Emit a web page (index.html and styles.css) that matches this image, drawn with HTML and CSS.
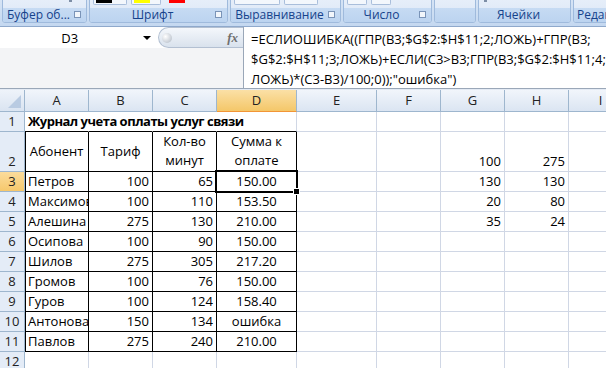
FILE: index.html
```html
<!DOCTYPE html>
<html lang="ru">
<head>
    <meta charset="UTF-8">
    <title>Журнал учета оплаты услуг связи</title>
    <link rel="stylesheet" href="styles.css">
</head>
<body>
    <div class="ribbon">
        <div class="group g1">
            <div class="btns"><span class="tick"></span></div>
            <div class="glabel">Буфер об...<span class="launcher"></span></div>
        </div>
        <div class="group g2">
            <div class="btns">
                <span class="btn w34"><span class="bar black"></span></span>
                <span class="btn w30"><span class="bar yellow"></span></span>
                <span class="bar red"></span>
            </div>
            <div class="glabel">Шрифт<span class="launcher"></span></div>
        </div>
        <div class="group g3">
            <div class="btns">
                <span class="btn w46"></span>
                <span class="btn w34"></span>
            </div>
            <div class="glabel">Выравнивание<span class="launcher"></span></div>
        </div>
        <div class="group g4">
            <div class="btns">
                <span class="btn w20"></span>
                <span class="btn w20"></span>
            </div>
            <div class="glabel">Число<span class="launcher"></span></div>
        </div>
        <div class="group g5">
            <div class="btns"></div>
            <div class="glabel blank"></div>
        </div>
        <div class="group g6">
            <div class="btns"><span class="tick"></span></div>
            <div class="glabel">Ячейки</div>
        </div>
        <div class="group g7">
            <div class="btns"></div>
            <div class="glabel left">Редакт</div>
        </div>
    </div>

    <div class="fbar">
        <div class="fleft">
            <div class="ftop">
                <div class="namebox">D3</div>
                <span class="dd"></span>
                <div class="fxpill">
                    <span class="ball"></span>
                    <span class="fx">fx</span>
                </div>
            </div>
        </div>
        <div class="formula">
            <div>=ЕСЛИОШИБКА((ГПР(B3;$G$2:$H$11;2;ЛОЖЬ)+ГПР(B3;</div>
            <div>$G$2:$H$11;3;ЛОЖЬ)+ЕСЛИ(C3&gt;B3;ГПР(B3;$G$2:$H$11;4;</div>
            <div>ЛОЖЬ)*(C3-B3)/100;0));"ошибка")</div>
        </div>
    </div>
    <div class="split"></div>

    <div class="sheet">
        <div class="corner"></div>
        <div class="ch">A</div><div class="ch">B</div><div class="ch">C</div><div class="ch on">D</div>
        <div class="ch">E</div><div class="ch">F</div><div class="ch">G</div><div class="ch">H</div><div class="ch">I</div>

        <div class="rh">1</div>
        <div class="c title nor tb">Журнал учета оплаты услуг связи</div>
        <div class="c nor tb"></div><div class="c nor tb"></div><div class="c tb"></div>
        <div class="c"></div><div class="c"></div><div class="c"></div><div class="c"></div><div class="c"></div>

        <div class="rh tall">2</div>
        <div class="c t first mid ctr">Абонент</div>
        <div class="c t mid ctr">Тариф</div>
        <div class="c t wrap">Кол-во минут</div>
        <div class="c t wrap">Сумма к оплате</div>
        <div class="c"></div><div class="c"></div>
        <div class="c num">100</div><div class="c num">275</div><div class="c"></div>

        <div class="rh on">3</div>
        <div class="c t first">Петров</div><div class="c t num">100</div><div class="c t num">65</div>
        <div class="c t ctr sel">150.00</div>
        <div class="c"></div><div class="c"></div>
        <div class="c num">130</div><div class="c num">130</div><div class="c"></div>

        <div class="rh">4</div>
        <div class="c t first">Максимов</div><div class="c t num">100</div><div class="c t num">110</div>
        <div class="c t ctr">153.50</div>
        <div class="c"></div><div class="c"></div>
        <div class="c num">20</div><div class="c num">80</div><div class="c"></div>

        <div class="rh">5</div>
        <div class="c t first">Алешина</div><div class="c t num">275</div><div class="c t num">130</div>
        <div class="c t ctr">210.00</div>
        <div class="c"></div><div class="c"></div>
        <div class="c num">35</div><div class="c num">24</div><div class="c"></div>

        <div class="rh">6</div>
        <div class="c t first">Осипова</div><div class="c t num">100</div><div class="c t num">90</div>
        <div class="c t ctr">150.00</div>
        <div class="c"></div><div class="c"></div><div class="c"></div><div class="c"></div><div class="c"></div>

        <div class="rh">7</div>
        <div class="c t first">Шилов</div><div class="c t num">275</div><div class="c t num">305</div>
        <div class="c t ctr">217.20</div>
        <div class="c"></div><div class="c"></div><div class="c"></div><div class="c"></div><div class="c"></div>

        <div class="rh">8</div>
        <div class="c t first">Громов</div><div class="c t num">100</div><div class="c t num">76</div>
        <div class="c t ctr">150.00</div>
        <div class="c"></div><div class="c"></div><div class="c"></div><div class="c"></div><div class="c"></div>

        <div class="rh">9</div>
        <div class="c t first">Гуров</div><div class="c t num">100</div><div class="c t num">124</div>
        <div class="c t ctr">158.40</div>
        <div class="c"></div><div class="c"></div><div class="c"></div><div class="c"></div><div class="c"></div>

        <div class="rh">10</div>
        <div class="c t first">Антонова</div><div class="c t num">150</div><div class="c t num">134</div>
        <div class="c t ctr">ошибка</div>
        <div class="c"></div><div class="c"></div><div class="c"></div><div class="c"></div><div class="c"></div>

        <div class="rh">11</div>
        <div class="c t first">Павлов</div><div class="c t num">275</div><div class="c t num">240</div>
        <div class="c t ctr">210.00</div>
        <div class="c"></div><div class="c"></div><div class="c"></div><div class="c"></div><div class="c"></div>

        <div class="rh">12</div>
        <div class="c"></div><div class="c"></div><div class="c"></div><div class="c"></div>
        <div class="c"></div><div class="c"></div><div class="c"></div><div class="c"></div><div class="c"></div>
    </div>
</body>
</html>
```

FILE: styles.css
```css
body {
    margin: 0;
    width: 606px;
    height: 368px;
    overflow: hidden;
    background-color: #fff;
    font-family: "Open Sans", "Noto Sans", sans-serif;
    color: #000;
}

/* ribbon */
.ribbon {
    display: flex;
    gap: 2px;
    height: 26px;
    padding-left: 2px;
    background: linear-gradient(#d6e4f5, #c4d8f0);
    border-bottom: 1px solid #8fa9cc;
    overflow: hidden;
}
.group {
    flex: none;
    box-sizing: border-box;
    height: 24px;
    margin-top: -1px;
    display: flex;
    flex-direction: column;
    justify-content: space-between;
    border: 1px solid #9fbadc;
    border-radius: 0 0 3px 3px;
    background: linear-gradient(#e6eef9, #d9e6f6);
    overflow: hidden;
}
.g1 { width: 85px; }
.g2 { width: 139px; }
.g3 { width: 111px; }
.g4 { width: 89px; }
.g5 { width: 42px; }
.g6 { width: 93px; }
.g7 { width: 90px; }
.btns {
    display: flex;
    gap: 4px;
    height: 5px;
    padding-left: 3px;
}
.btn {
    box-sizing: border-box;
    height: 5px;
    border: 1px solid #a9bedb;
    border-top: none;
    border-radius: 0 0 2px 2px;
    background-color: #f3f7fc;
    padding-left: 2px;
}
.w20 { width: 20px; }
.w30 { width: 30px; }
.w34 { width: 34px; }
.w46 { width: 46px; }
.bar {
    display: block;
    width: 16px;
    height: 3px;
}
.black { background-color: #000; }
.yellow { background-color: #ffff00; }
.red { background-color: #ff0000; margin-left: 4px; }
.tick {
    width: 3px;
    height: 2px;
    margin-left: 63px;
    background-color: #7d8ea6;
}
.g6 .tick { margin-left: 2px; }
.glabel {
    position: relative;
    height: 14px;
    background: linear-gradient(#c6dbf3, #bcd4f0);
    color: #15428b;
    font-size: 12px;
    line-height: 14px;
    text-align: center;
    padding-right: 12px;
    white-space: nowrap;
}
.glabel.left {
    text-align: left;
    padding-left: 3px;
}
.launcher {
    position: absolute;
    right: 5px;
    top: 3px;
    width: 5px;
    height: 5px;
    border: 1px solid #7a94b8;
    background-color: #f2f6fb;
}

/* formula bar */
.fbar {
    display: flex;
    height: 61px;
    border-bottom: 1px solid #9aa7b8;
}
.fleft {
    width: 243px;
    background-color: #f3f4f6;
}
.ftop {
    display: flex;
    align-items: center;
    height: 21px;
    background-color: #fff;
}
.namebox {
    width: 140px;
    text-align: center;
    font-size: 13px;
}
.dd {
    width: 0;
    height: 0;
    margin-left: 4px;
    border-left: 4px solid transparent;
    border-right: 4px solid transparent;
    border-top: 4px solid #000;
}
.fxpill {
    display: flex;
    align-items: center;
    box-sizing: border-box;
    width: 85px;
    height: 21px;
    margin-left: 7px;
    border: 1px solid #b3c0d2;
    border-right: none;
    border-radius: 11px 0 0 11px;
    background: linear-gradient(#f4f7fb, #d9e2ed);
}
.ball {
    width: 10px;
    height: 10px;
    margin-left: 3px;
    border-radius: 50%;
    background: radial-gradient(circle at 35% 35%, #fff, #aeb7c3);
}
.fx {
    margin-left: auto;
    padding-right: 5px;
    font-family: "Liberation Serif", serif;
    font-style: italic;
    font-weight: bold;
    font-size: 13px;
    color: #6f6f6f;
}
.formula {
    flex: 1;
    padding: 2px 0 0 7px;
    border-left: 1px solid #9aa7b8;
    font-size: 13px;
    line-height: 20px;
    white-space: nowrap;
}
.split {
    height: 1px;
    background-color: #e3eaf4;
}

/* sheet */
.sheet {
    display: grid;
    grid-template-columns: 25px 64px 64px 64px 80px 80px 64px 64px 64px 64px;
    grid-template-rows: 22px 20px 40px repeat(10, 20px);
    font-size: 13px;
}
.corner {
    position: relative;
    box-sizing: border-box;
    border-right: 1px solid #9eb6ce;
    border-bottom: 1px solid #9eb6ce;
    background: linear-gradient(#eef3fa, #dae4f1);
}
.corner::after {
    content: "";
    position: absolute;
    right: 3px;
    bottom: 3px;
    border-left: 13px solid transparent;
    border-bottom: 13px solid #b9cbe2;
}
.ch {
    box-sizing: border-box;
    border-right: 1px solid #9eb6ce;
    border-bottom: 1px solid #9eb6ce;
    background: linear-gradient(#f1f5fb, #dbe5f2);
    color: #222;
    text-align: center;
    line-height: 21px;
}
.ch.on {
    background: linear-gradient(#fbe0a6, #f4c769);
    border-bottom-color: #f29536;
}
.rh {
    box-sizing: border-box;
    border-right: 1px solid #9eb6ce;
    border-bottom: 1px solid #9eb6ce;
    background-color: #e4ecf7;
    color: #222;
    text-align: center;
    line-height: 19px;
}
.rh.tall {
    display: flex;
    align-items: flex-end;
    justify-content: center;
}
.rh.on {
    background: linear-gradient(#fbdc9c, #f6c86c);
}
.c {
    box-sizing: border-box;
    display: flex;
    align-items: flex-end;
    padding: 0 3px 1px;
    border-right: 1px solid #d0d7e5;
    border-bottom: 1px solid #d0d7e5;
    white-space: nowrap;
    overflow: hidden;
    line-height: 18px;
}
.c.t {
    border-color: #000;
}
.c.tb {
    border-bottom-color: #000;
}
.c.nor {
    border-right-color: transparent;
}
.c.first {
    box-shadow: inset 1px 0 0 #000;
}
.c.title {
    overflow: visible;
    font-weight: bold;
    letter-spacing: -0.5px;
}
.c.num {
    justify-content: flex-end;
}
.c.ctr {
    justify-content: center;
}
.c.mid {
    align-items: center;
}
.c.wrap {
    align-items: center;
    justify-content: center;
    white-space: normal;
    text-align: center;
    line-height: 19px;
}
.c.sel {
    position: relative;
    overflow: visible;
}
.c.sel::before {
    content: "";
    position: absolute;
    left: -2px;
    top: -2px;
    right: -2px;
    bottom: -2px;
    border: 2px solid #000;
}
.c.sel::after {
    content: "";
    position: absolute;
    right: -4px;
    bottom: -4px;
    width: 5px;
    height: 5px;
    background-color: #000;
    border: 1px solid #fff;
}
```
